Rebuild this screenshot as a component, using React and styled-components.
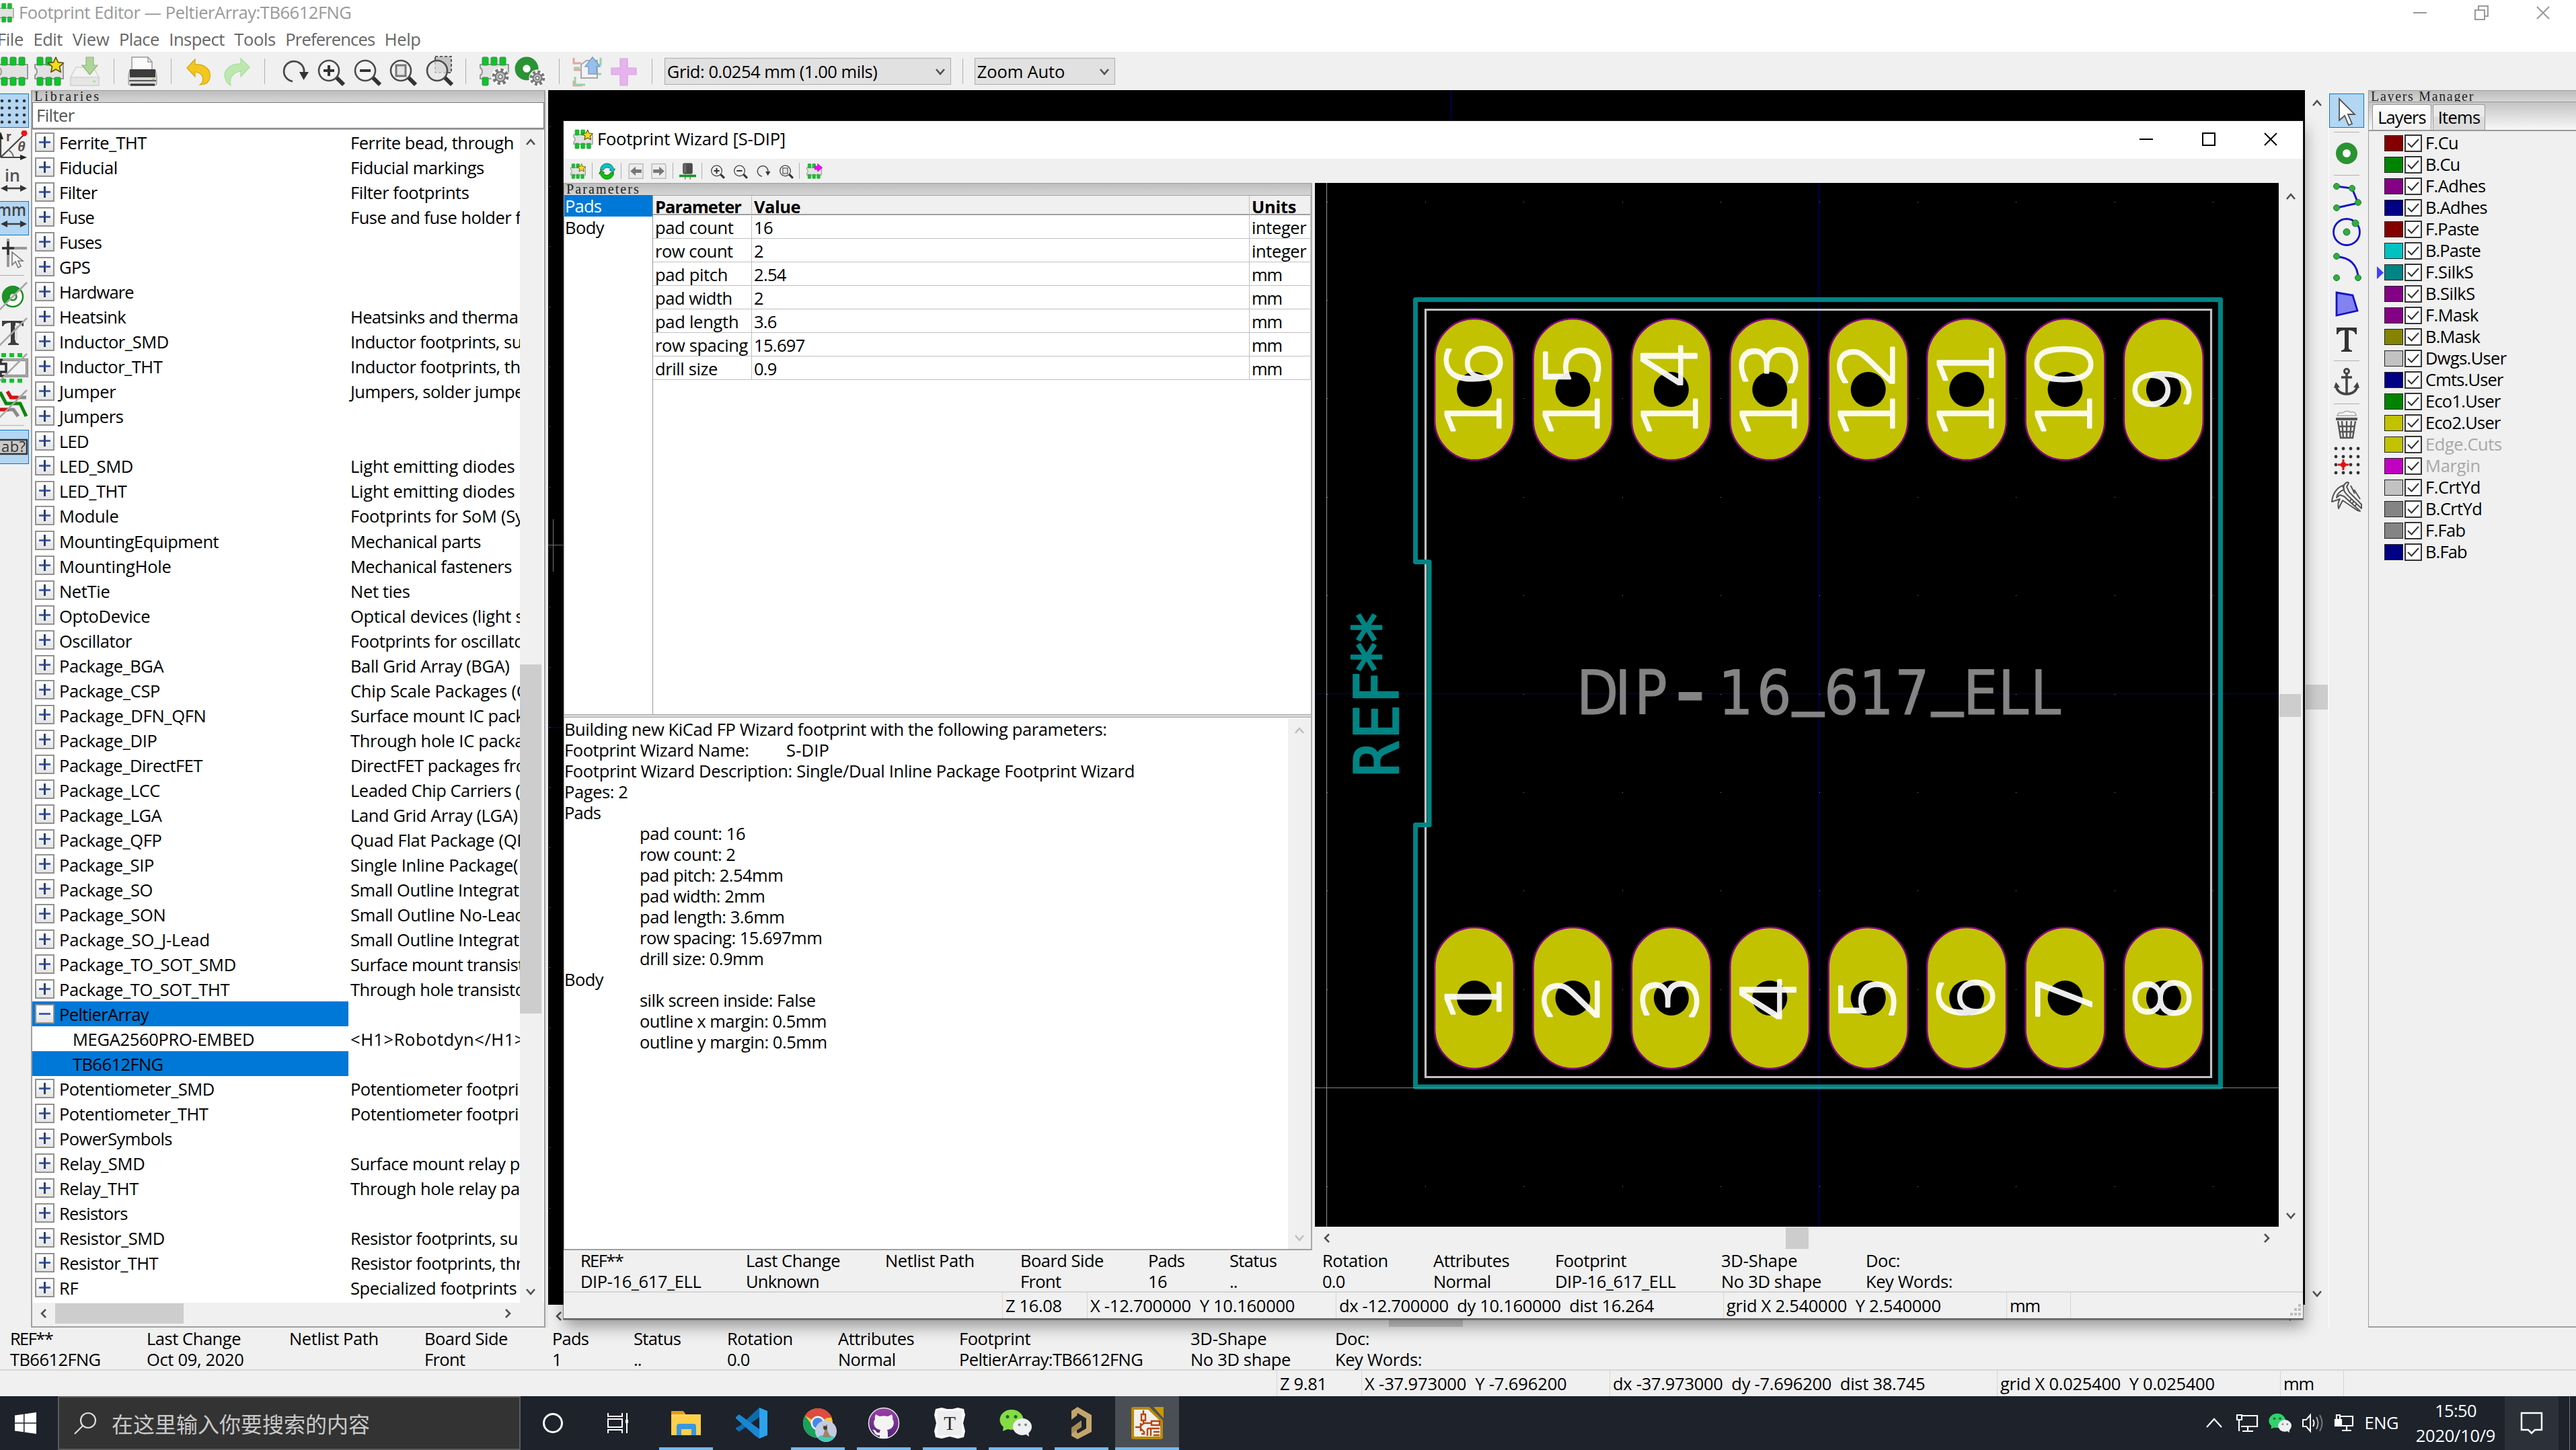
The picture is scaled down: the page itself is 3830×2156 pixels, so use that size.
import React from "react";
import styled, { createGlobalStyle, css } from "styled-components";

const UI = '"Open Sans", "Noto Sans", "Noto Sans CJK SC", sans-serif';

const Global = createGlobalStyle`
  html, body { margin: 0; padding: 0; overflow: hidden; background: #f0f0f0; }
  * { box-sizing: border-box; }
  body { font-family: ${UI}; font-size: 25.5px; color: #000; }
  svg { display: block; flex: none; }
`;

/* ---------- text with system-UI advance widths ---------- */

const ADV = {
  " ": 274, "!": 284, "(": 302, ")": 302, "*": 417, "+": 684, ",": 217, "-": 400, ".": 217, "/": 390,
  ":": 217, "<": 684, ">": 684, "?": 448, A: 645, B: 573, C: 619, D: 701, E: 506, F: 488, G: 687, H: 710,
  I: 266, J: 357, K: 580, L: 471, M: 898, N: 748, O: 754, P: 560, Q: 754, R: 598, S: 531, T: 524, U: 687,
  V: 621, W: 934, X: 590, Y: 553, Z: 570, "[": 302, "]": 302, _: 415, a: 509, b: 588, c: 462, d: 588,
  e: 523, f: 313, g: 588, h: 565, i: 242, j: 242, k: 497, l: 242, m: 861, n: 565, o: 586, p: 588, q: 588,
  r: 348, s: 424, t: 339, u: 565, v: 479, w: 723, x: 459, y: 484, z: 452, "—": 1000,
};
const SIZE = 26;
const ctx = document.createElement("canvas").getContext("2d");

function tracking(text, width, bold, family) {
  const target = width || [...text].reduce((s, c) => s + (ADV[c] || 539), 0) * SIZE / 1000;
  ctx.font = family || `${bold ? 700 : 400} 25.5px "Open Sans"`;
  return (target - ctx.measureText(text).width) / text.length;
}

const Txt = styled.span`
  white-space: pre;
  line-height: 1;
  font-weight: ${(p) => (p.$bold ? 700 : 400)};
  ${(p) => p.$color && css`color: ${p.$color};`}
`;
const T = ({ children, w, bold, color }) => (
  <Txt $bold={bold} $color={color} style={{ letterSpacing: `${tracking(children, w, bold)}px` }}>
    {children}
  </Txt>
);

const CaptionBar = styled.div`
  height: ${(p) => p.$h || 18}px;
  flex: none;
  display: flex;
  align-items: center;
  padding-left: 3px;
  border-top: 1px solid #a0a0a0;
  background: linear-gradient(#bdbdbd, #d6d6d6);
  font: 20px/17px "Liberation Serif", "Noto Sans CJK SC", serif;
  white-space: pre;
  color: #222;
`;
const Caption = ({ children, h }) => (
  <CaptionBar $h={h}>
    <span style={{ letterSpacing: `${tracking(children, children.length * 11, false, '20px "Liberation Serif"')}px` }}>
      {children}
    </span>
  </CaptionBar>
);

/* ---------- icons ---------- */

const Ico = ({ s = 48, children }) => (
  <svg width={s} height={s} viewBox="0 0 48 48" fill="none">{children}</svg>
);
const G = "#0fc42b";
const Footprint = ({ skip = [] }) => (
  <>
    <path d="M3 14H45V35H3V30a5 6 0 0 0 0-11Z" fill="#e2e2e2" stroke="#999" strokeWidth="2" />
    {[[6, 3], [19, 3], [32, 3], [6, 33], [19, 33], [32, 33]].map(([x, y], i) =>
      skip.includes(i) ? null : <rect key={i} x={x} y={y} width="9" height="12" rx="1.5" fill={G} stroke="#3d8a48" strokeWidth="1" />)}
  </>
);
const Gear = ({ x, y, r = 10 }) => (
  <g transform={`translate(${x} ${y})`}>
    <circle r={r} stroke="#fff" strokeWidth="7" />
    <circle r={r} stroke="#777" strokeWidth="5" strokeDasharray={`${r * 0.42} ${r * 0.365}`} />
    <circle r={r * 0.72} fill="#bdbdbd" stroke="#777" strokeWidth="2" />
    <circle r={r * 0.28} fill="#fff" stroke="#777" strokeWidth="1.5" />
  </g>
);
const Star = () => (
  <path d="M34 3l3.4 7.6 8.2.9-6.1 5.6 1.7 8.1L34 21l-7.2 4.200 1.700-8.100-6.100-5.600 8.200-.900z" fill="#f2dc1c" stroke="#59500a" strokeWidth="1.6" strokeLinejoin="round" />
);
const Lens = ({ children }) => (
  <>
    <path d="M35 33L46 44" stroke="#333" strokeWidth="6" />
    <circle cx="24" cy="23" r="15" fill="#f4f4f4" stroke="#4c4c4c" strokeWidth="2.6" />
    {children}
  </>
);
const Gdot = ({ x, y, r = 4.5 }) => <circle cx={x} cy={y} r={r} fill="#2fae3f" stroke="#1c7a2a" strokeWidth="1" />;
const Slash = () => <path d="M0 46L43 3" stroke="#a6a6a6" strokeWidth="2.6" />;

const icons = {
  footprint: <Footprint />,
  newFootprint: <><Footprint skip={[2]} /><Star /></>,
  save: (
    <g opacity=".9">
      <path d="M11 18H37L45 33V45H3V33Z" fill="#f3f3f3" stroke="#d2d2d2" strokeWidth="1.5" />
      <path d="M3 33H45V45H3Z" fill="#e6e6e6" stroke="#cfcfcf" strokeWidth="1.5" />
      <path d="M26 3H37V15H43L31.500 29L20 15H26Z" fill="#a9d192" stroke="#86b56c" strokeWidth="1.2" />
      <path d="M36 39h4" stroke="#a5e08f" strokeWidth="3" />
    </g>
  ),
  print: (
    <>
      <path d="M8 3H32L38 10V24H8Z" fill="#fafafa" stroke="#999" strokeWidth="1.5" />
      <path d="M32 3V10H38" stroke="#999" strokeWidth="1.500" />
      <path d="M5 22H43L45 30V42Q45 45 42 45H6Q3 45 3 42V30Z" fill="#d8d8d8" stroke="#8a8a8a" />
      <path d="M5 21H43V33H5Z" fill="#3b3b3b" />
      <path d="M4 38H44" stroke="#555" strokeWidth="2" />
      <path d="M38 36h4" stroke="#7be04c" strokeWidth="2.500" />
      <path d="M6 44H42" stroke="#333" strokeWidth="3" />
    </>
  ),
  undo: (
    <path d="M5 19L17 6V14C32 13 41 22 39 33C38 40 33 44 24 44C32 39 30 26 17 25V32Z" fill="#f2c81c" stroke="#d3a40a" strokeWidth="1.200" />
  ),
  redo: (
    <path d="M44 18L31 5V13C14 12 4 24 8 35C9 40 12 43 16 45C13 34 20 25 31 24V32Z" fill="#bce8b0" stroke="#a6dd99" strokeWidth="1.200" />
  ),
  rotate: (
    <>
      <path d="M23 39A15 15 0 1 1 40 26" stroke="#4a4a4a" strokeWidth="2.800" />
      <path d="M33 25H47L39.500 37Z" fill="#333" />
    </>
  ),
  zoomIn: <Lens><path d="M16 23H32M24 15V31" stroke="#333" strokeWidth="4" /></Lens>,
  zoomOut: <Lens><path d="M16 23H32" stroke="#333" strokeWidth="4" /></Lens>,
  zoomFit: <Lens><rect x="17" y="15" width="14" height="16" fill="#e4e4e4" stroke="#777" strokeWidth="3" /></Lens>,
  zoomSel: (
    <>
      <rect x="21" y="2" width="24" height="24" fill="#c4c4c4" stroke="#333" strokeWidth="1.600" strokeDasharray="4 3" />
      <path d="M35 33L46 44" stroke="#333" strokeWidth="6" />
      <circle cx="24" cy="23" r="15" fill="#e6e6e6" fillOpacity=".7" stroke="#4c4c4c" strokeWidth="2.600" />
    </>
  ),
  fpGear: <><Footprint skip={[4, 5]} /><Gear x={33} y={32} /></>,
  padGear: (
    <>
      <circle cx="19" cy="20" r="11.500" stroke="#2a9334" strokeWidth="12" />
      <circle cx="19" cy="20" r="5.500" fill="#fff" />
      <Gear x={35} y={34} r={9} />
    </>
  ),
  insert: (
    <g opacity=".6">
      <path d="M3 4V12H14M3 22H14M3 38V45H16" stroke="#e07070" strokeWidth="3" />
      <path d="M3 19H12M5 32V44H20M43 4V14H36M44 28H34" stroke="#5cc07a" strokeWidth="3" />
      <path d="M14 14L22 8H38V34H14Z" fill="#f4f4f4" stroke="#777" strokeWidth="2" />
      <path d="M31 3L42 17H37V28H25V17H20Z" fill="#5fa0ea" stroke="#2f6ab4" strokeWidth="1.500" />
    </g>
  ),
  plus: <path d="M19 5H30V19H43V29H30V45H19V29H6V19H19Z" fill="#e6b3ec" stroke="#d9a3e2" strokeWidth="1.200" />,
  refresh: (
    <>
      <path d="M5 21A19 18 0 0 1 43 19L47 17L42 27L31 21L35 20A11 10 0 0 0 14 21Z" fill="#0bc4c4" stroke="#036060" strokeWidth="1.600" />
      <path d="M43 28A19 18 0 0 1 5 30L1 32L6 22L17 28L13 29A11 10 0 0 0 34 28Z" fill="#08c408" stroke="#035a03" strokeWidth="1.600" />
    </>
  ),
  prev: (
    <><path d="M6 3H44V45H4V8Z" fill="#ededed" stroke="#b4b4b4" strokeWidth="2.500" /><path d="M8 24L23 11V19H40V29H23V37Z" fill="#777" /></>
  ),
  next: (
    <><path d="M4 3H42L44 8V45H4Z" fill="#ededed" stroke="#b4b4b4" strokeWidth="2.500" /><path d="M40 24L25 11V19H8V29H25V37Z" fill="#777" /></>
  ),
  threeD: (
    <><path d="M17 34V48M31 34V48" stroke="#555" strokeWidth="2" /><rect x="10" y="1" width="28" height="31" rx="4" fill="#4a4a4a" /><rect x="13" y="3" width="7" height="26" fill="#6c6c6c" /><rect x="0" y="34" width="48" height="7" fill="#12961f" /></>
  ),
  exportFp: <><Footprint skip={[2]} /><path d="M26 10H34V3L47 14L34 25V19H26Z" fill="#f0f" stroke="#90c" strokeWidth="1.500" /></>,
  grid: (
    <g fill="#333">
      {[0, 1, 2, 3].map((r) => [0, 1, 2, 3].map((c) => <circle key={r * 4 + c} cx={6 + c * 11} cy={9 + r * 10.500} r="2.300" />))}
    </g>
  ),
  polar: (
    <>
      <path d="M4 40V6M4 40L39 6M4 40H40" stroke="#444" strokeWidth="2.200" />
      <path d="M0 13L4 2L8 13ZM33 36L43 40L33 44Z" fill="#222" />
      <path d="M15 29A14 14 0 0 1 23 39" stroke="#777" strokeWidth="2" />
      <circle cx="39" cy="4" r="4.500" fill="#f01414" />
      <text x="12" y="16" fontFamily="Liberation Sans, sans-serif" fontWeight="700" fontSize="20" fill="#5b4b4b">r</text>
      <text x="29" y="31" fontFamily="Liberation Sans, sans-serif" fontWeight="700" fontStyle="italic" fontSize="21" fill="#5b4b4b">θ</text>
    </>
  ),
  inch: (
    <>
      <text x="10" y="23" fontFamily="Open Sans, sans-serif" fontWeight="600" fontSize="25" fill="#555">in</text>
      <path d="M8 33H40" stroke="#444" strokeWidth="2.600" /><path d="M14 28L4 33L14 38ZM33 28L43 33L33 38Z" fill="#333" />
    </>
  ),
  mm: (
    <>
      <text x="-2" y="21" fontFamily="Open Sans, sans-serif" fontWeight="600" fontSize="25" fill="#444" textLength="44" lengthAdjust="spacingAndGlyphs">mm</text>
      <path d="M8 33H40" stroke="#444" strokeWidth="2.600" /><path d="M14 28L4 33L14 38ZM33 28L43 33L33 38Z" fill="#333" />
    </>
  ),
  cursor: (
    <>
      <path d="M15 2V44M6 16H43" stroke="#999" strokeWidth="4" /><path d="M15 6V26M6 16H24" stroke="#333" strokeWidth="3.500" />
      <path d="M21 22V41L26 36L30 45L34 43L30 35H37Z" fill="#f6f6f6" stroke="#777" strokeWidth="1.600" />
    </>
  ),
  padOff: (
    <>
      <circle cx="22" cy="24" r="15" fill="#fff" stroke="#1d8d24" strokeWidth="2.500" />
      <path d="M33 13A15.500 15.500 0 1 0 11 35Z" fill="#1f9127" />
      <circle cx="22" cy="24" r="5.500" fill="#dfe9df" stroke="#1d8d24" strokeWidth="2.500" /><Slash />
    </>
  ),
  textOff: (
    <>
      <path d="M6 7H38V15H36Q35 10 26 10V38Q26 40 31 41V43H15V41Q19 40 19 38V10Q9 10 8 15H6Z" fill="#3c3c3c" />
      <path d="M27 14V36" stroke="#ddd" strokeWidth="4" /><Slash />
    </>
  ),
  fpOff: (
    <>
      <path d="M4 12H43V36H4V30H12V18H4Z" fill="#f4f4f4" stroke="#333" strokeWidth="3.500" />
      <path d="M7 12H43V36H10" stroke="#aaa" strokeWidth="3" />
      {[5, 17, 29].map((x) => <React.Fragment key={x}><rect x={x} y="2" width="7" height="6" fill={G} /><rect x={x} y="40" width="7" height="6" fill={G} /></React.Fragment>)}
      <Slash />
    </>
  ),
  tracksOff: (
    <>
      <path d="M14 6L20 14H42" stroke="#8a8a8a" strokeWidth="5" /><path d="M14 5L19 14H30" stroke="#d81010" strokeWidth="5" />
      <path d="M3 6L12 23H33L42 42" stroke="#0f860f" strokeWidth="5" />
      <path d="M0 32H23L30 42" stroke="#8a8a8a" strokeWidth="5" /><path d="M0 32H16" stroke="#d81010" strokeWidth="5" /><Slash />
    </>
  ),
  ab: (
    <>
      <rect x="-4" y="14" width="47" height="21" fill="#c9c9c9" stroke="#333" strokeWidth="2.500" />
      <text x="5" y="32" fontFamily="Open Sans, sans-serif" fontSize="22" fill="#333" textLength="36">ab?</text>
    </>
  ),
  select: <path d="M13 6V38L21 31L27 45L32 43L26 29H36Z" fill="#fafafa" stroke="#555" strokeWidth="1.800" />,
  pad: <><circle cx="24" cy="24" r="11" stroke="#2a9431" strokeWidth="10" /><circle cx="24" cy="24" r="5.500" fill="#fff" /></>,
  polyline: (
    <><path d="M9 9L32 12L41 34L9 41" stroke="#1414c8" strokeWidth="3" /><Gdot x={9} y={9} /><Gdot x={32} y={12} /><Gdot x={41} y={33} /><Gdot x={9} y={41} /></>
  ),
  circle: <><circle cx="24" cy="24" r="19.500" stroke="#1414c8" strokeWidth="2.800" /><Gdot x={24} y={24} r={5} /><Gdot x={37} y={11} r={5} /></>,
  arc: <><path d="M9 8C28 8 41 20 41 40" stroke="#1414c8" strokeWidth="3" /><Gdot x={9} y={7} /><Gdot x={41} y={39} /><Gdot x={9} y={39} /></>,
  polygon: <path d="M9 7L33 11L40 34L9 41Z" fill="#8282f0" stroke="#1414c8" strokeWidth="2.800" />,
  text: <path d="M9 6H39V16H37Q36 10 27 10V36Q27 39 32 40V42H16V40Q21 39 21 36V10Q12 10 11 16H9Z" fill="#333" />,
  anchor: (
    <>
      <circle cx="24" cy="8" r="3.500" stroke="#444" strokeWidth="3" />
      <path d="M24 12V42M16 17H32M8 28Q9 41 24 42Q39 41 40 28" stroke="#444" strokeWidth="3.500" />
      <path d="M5 33L8 24L14 32ZM43 33L40 24L34 32Z" fill="#444" />
    </>
  ),
  trash: (
    <>
      <path d="M10 10Q12 4 18 6Q24 1 30 5Q37 3 38 10Z" fill="#f6f6f6" stroke="#aaa" strokeWidth="1.500" />
      <path d="M8 13H40V17H8Z" fill="#555" />
      <path d="M11 18L15 43H33L37 18M17 18L19 43M24 18V43M31 18L29 43M12 26H36M13 34H35" stroke="#555" strokeWidth="2.400" />
    </>
  ),
  origin: (
    <>
      <g fill="#333">{[0, 1, 2, 3].map((r) => [0, 1, 2, 3].map((c) => <circle key={r * 4 + c} cx={8 + c * 11} cy={6 + r * 12} r="2.400" />))}</g>
      <path d="M19 22V38M11 30H27" stroke="#e01010" strokeWidth="3" /><circle cx="19" cy="30" r="4" fill="#e01010" />
    </>
  ),
  caliper: (
    <g fill="#f6f6f6" stroke="#555" strokeWidth="2" strokeLinejoin="round">
      <path d="M20 7Q25 1 27 4L24 10L28 18L46 36V42L25 22Q18 16 20 7Z" />
      <path d="M2 32Q4 14 18 8L20 14Q10 18 9 26L14 22L20 24L44 46L40 45L18 30L12 42Q10 34 14 28L8 30Z" />
      <path d="M28 32L31 28M32 35L35 31M36 39L39 35M30 8L36 20M35 14L44 28" fill="none" />
    </g>
  ),
};

/* ---------- shared parts ---------- */

const Chev = ({ dir, color = "#505050" }) => {
  const d = { up: "M5 15L11 8L17 15", down: "M5 8L11 15L17 8", left: "M14 5L8 11L14 17", right: "M8 5L14 11L8 17" }[dir];
  return <svg width="22" height="22" viewBox="0 0 22 22"><path d={d} fill="none" stroke={color} strokeWidth="2.600" /></svg>;
};

const Scroll = styled.div`
  display: flex;
  flex: none;
  align-items: center;
  justify-content: space-between;
  background: #f0f0f0;
  flex-direction: ${(p) => (p.$v ? "column" : "row")};
  width: ${(p) => (p.$w ? `${p.$w}px` : "auto")};
  height: ${(p) => (p.$h ? `${p.$h}px` : "auto")};
  padding: ${(p) => p.$pad || "8px 0"};
`;
const Track = styled.div`
  flex: 1;
  display: flex;
  flex-direction: ${(p) => (p.$v ? "column" : "row")};
  width: ${(p) => (p.$v ? "100%" : "auto")};
  height: ${(p) => (p.$v ? "auto" : "100%")};
`;
const Thumb = styled.div`
  background: #cdcdcd;
  flex: none;
  ${(p) => (p.$v
    ? css`margin-top: ${p.$at}px; height: ${p.$len}px; width: ${p.$t}px;`
    : css`margin-left: ${p.$at}px; width: ${p.$len}px; height: ${p.$t}px;`)}
`;

const Slot = styled.div`
  flex: none;
  display: flex;
  align-items: center;
  justify-content: center;
  width: ${(p) => p.$w}px;
  height: ${(p) => p.$h}px;
`;
const SepV = styled.div`
  width: 1px;
  height: ${(p) => p.$h}px;
  background: #b0b0b0;
`;

/* ---------- main window chrome ---------- */

const Screen = styled.div`
  position: relative;
  width: 3830px;
  height: 2156px;
  overflow: hidden;
  display: flex;
  flex-direction: column;
  background: #f0f0f0;
`;
const TitleBar = styled.div`
  height: 38px;
  background: #fff;
  display: flex;
  align-items: center;
  flex: none;
  color: #999;
`;
const TitleIcon = styled.div`
  width: 28px;
  overflow: hidden;
  display: flex;
  justify-content: flex-end;
  padding-right: 6px;
`;
const Controls = styled.div`
  margin-left: auto;
  display: flex;
  align-items: center;
  gap: ${(p) => p.$gap}px;
  padding-right: ${(p) => p.$right}px;
`;
const Menu = styled.div`
  height: 39px;
  padding-top: 2px;
  background: #fff;
  display: flex;
  align-items: center;
  gap: 14.6px;
  color: #666;
  flex: none;
  & > :first-child { margin-left: -4px; }
`;
const Toolbar = styled.div`
  height: 57px;
  display: flex;
  align-items: center;
  flex: none;
  & > :first-child { margin-left: -7px; }
`;
const Combo = styled.div`
  height: 40px;
  width: ${(p) => p.$w}px;
  margin: 0 ${(p) => p.$mr}px 0 ${(p) => p.$ml}px;
  background: #e1e1e1;
  border: 1px solid #adadad;
  display: flex;
  align-items: center;
  justify-content: space-between;
  padding: 0 4px 0 3px;
  & > span { padding-top: 2px; }
`;
const Body = styled.div`
  height: 1840px;
  display: flex;
  flex: none;
`;
const SideBar = styled.div`
  width: ${(p) => p.$w}px;
  flex: none;
  display: flex;
  flex-direction: column;
  padding-top: 4px;
  align-items: ${(p) => (p.$right ? "center" : "flex-start")};
  background: #f0f0f0;
  border-left: ${(p) => (p.$right ? "1px solid #fff" : "none")};
`;
const SideButton = styled.div`
  width: ${(p) => (p.$right ? 52 : 43)}px;
  height: 53.2px;
  flex: none;
  display: flex;
  align-items: center;
  justify-content: flex-end;
  padding: 1px 0;
  & > div {
    width: 100%;
    height: 51px;
    display: flex;
    align-items: center;
    overflow: hidden;
    justify-content: ${(p) => (p.$right ? "center" : "flex-end")};
    border: ${(p) => (p.$on ? "1.500px solid #0078d7" : "1.500px solid transparent")};
    ${(p) => !p.$right && "border-left: none;"}
    background: ${(p) => (p.$on ? "#b3d6f3" : "transparent")};
  }
  svg { margin-right: ${(p) => (p.$right ? 0 : -3)}px; }
`;
const SideSep = styled.div`
  width: ${(p) => (p.$right ? 38 : 36)}px;
  height: 10.5px;
  flex: none;
  display: flex;
  align-items: center;
  &::after { content: ""; height: 1px; width: 100%; background: #b0b0b0; }
`;

/* ---------- library tree ---------- */

const Panel = styled.div`
  width: 765px;
  flex: none;
  display: flex;
  flex-direction: column;
  border-left: 2px solid #a0a0a0;
  border-right: 2px solid #a0a0a0;
  border-bottom: 2px solid #a0a0a0;
  background: #f0f0f0;
`;
const FilterBox = styled.div`
  height: 39px;
  flex: none;
  border: 1px solid #7a7a7a;
  background: #fff;
  color: #555;
  display: flex;
  align-items: center;
  padding-left: 5px;
`;
const TreeArea = styled.div`
  height: 1746px;
  flex: none;
  display: flex;
  border-top: 2px solid #a0a0a0;
  background: #fff;
`;
const Rows = styled.div`
  width: 725px;
  flex: none;
  overflow: hidden;
`;
const TreeRow = styled.div`
  height: 37.03px;
  display: grid;
  grid-template-columns: 470px 255px;
  & span { padding-top: 3px; }
`;
const NameCell = styled.div`
  display: flex;
  align-items: center;
  gap: 7px;
  padding-left: ${(p) => (p.$child ? 60 : 4)}px;
  background: ${(p) => (p.$on ? "#0078d7" : "transparent")};
`;
const DescCell = styled.div`
  display: flex;
  align-items: center;
  padding-left: 3px;
  overflow: hidden;
`;
const Expander = styled.div`
  width: 29px;
  height: 29px;
  flex: none;
  border: 2px solid #919191;
  background: linear-gradient(#fff, #e4e4e4);
  display: flex;
  align-items: center;
  justify-content: center;
`;

const tree = [
  ["Ferrite_THT", "Ferrite bead, through"], ["Fiducial", "Fiducial markings"], ["Filter", "Filter footprints"],
  ["Fuse", "Fuse and fuse holder f"], ["Fuses", ""], ["GPS", ""], ["Hardware", ""],
  ["Heatsink", "Heatsinks and therma"], ["Inductor_SMD", "Inductor footprints, su"], ["Inductor_THT", "Inductor footprints, th"],
  ["Jumper", "Jumpers, solder jumpe"], ["Jumpers", ""], ["LED", ""], ["LED_SMD", "Light emitting diodes"],
  ["LED_THT", "Light emitting diodes"], ["Module", "Footprints for SoM (Sy"], ["MountingEquipment", "Mechanical parts"],
  ["MountingHole", "Mechanical fasteners"], ["NetTie", "Net ties"], ["OptoDevice", "Optical devices (light s"],
  ["Oscillator", "Footprints for oscillato"], ["Package_BGA", "Ball Grid Array (BGA)"], ["Package_CSP", "Chip Scale Packages (C"],
  ["Package_DFN_QFN", "Surface mount IC pack"], ["Package_DIP", "Through hole IC packa"], ["Package_DirectFET", "DirectFET packages fro"],
  ["Package_LCC", "Leaded Chip Carriers ("], ["Package_LGA", "Land Grid Array (LGA)"], ["Package_QFP", "Quad Flat Package (QF"],
  ["Package_SIP", "Single Inline Package("], ["Package_SO", "Small Outline Integrat"], ["Package_SON", "Small Outline No-Lead"],
  ["Package_SO_J-Lead", "Small Outline Integrat"], ["Package_TO_SOT_SMD", "Surface mount transist"],
  ["Package_TO_SOT_THT", "Through hole transisto"], ["PeltierArray", "", "open"], ["MEGA2560PRO-EMBED", "<H1>Robotdyn</H1>", "child"],
  ["TB6612FNG", "", "childOn"], ["Potentiometer_SMD", "Potentiometer footpri"], ["Potentiometer_THT", "Potentiometer footpri"],
  ["PowerSymbols", ""], ["Relay_SMD", "Surface mount relay p"], ["Relay_THT", "Through hole relay pa"], ["Resistors", ""],
  ["Resistor_SMD", "Resistor footprints, su"], ["Resistor_THT", "Resistor footprints, thr"], ["RF", "Specialized footprints"],
];

const LibraryPanel = () => (
  <Panel>
    <Caption>Libraries</Caption>
    <FilterBox><T>Filter</T></FilterBox>
    <TreeArea>
      <Rows>
        {tree.map(([name, desc, kind], i) => {
          const child = kind === "child" || kind === "childOn";
          return (
            <TreeRow key={i}>
              <NameCell $child={child} $on={kind === "open" || kind === "childOn"}>
                {!child && (
                  <Expander>
                    <svg width="19" height="19" viewBox="0 0 19 19">
                      <path d="M1 9.500H18" stroke="#4460ac" strokeWidth="3" />
                      {kind !== "open" && <path d="M9.500 1V18" stroke="#2c3f78" strokeWidth="3" />}
                    </svg>
                  </Expander>
                )}
                <T>{name}</T>
              </NameCell>
              <DescCell>{desc && <T>{desc}</T>}</DescCell>
            </TreeRow>
          );
        })}
      </Rows>
      <Scroll $v $w={34} $pad="7px 3px 6px 0">
        <Chev dir="up" /><Track $v><Thumb $v $at={766} $len={519} $t={32} /></Track><Chev dir="down" />
      </Scroll>
    </TreeArea>
    <Scroll $h={34} $pad="1px 43px 3px 6px">
      <Chev dir="left" /><Track><Thumb $at={6} $len={191} $t={30} /></Track><Chev dir="right" />
    </Scroll>
  </Panel>
);

/* ---------- main canvas ---------- */

const Gutter = styled.div`
  width: 4px;
  flex: none;
  background: #e8e8e8;
`;
const CanvasCol = styled.div`
  width: 2612px;
  flex: none;
  display: flex;
  flex-direction: column;
`;

/* ---------- layers ---------- */

const LayersPanel = styled.div`
  width: 310px;
  margin-left: 6px;
  flex: none;
  display: flex;
  flex-direction: column;
  border-left: 1.5px solid #a0a0a0;
  border-bottom: 2px solid #a0a0a0;
`;
const Tabs = styled.div`
  height: 44px;
  flex: none;
  border-top: 1px solid #999;
  border-bottom: 2px solid #999;
  background: linear-gradient(#c4c4c4, #f8f8f8);
  display: flex;
  align-items: flex-end;
  padding-left: 5px;
  gap: 2px;
`;
const Tab = styled.div`
  width: ${(p) => p.$w}px;
  height: 38px;
  border: 1px solid #999;
  border-bottom: none;
  border-radius: 3px 3px 0 0;
  background: ${(p) => (p.$on ? "linear-gradient(#fff, #f0f0f0)" : "linear-gradient(#eaeaea 45%, #dcdcdc 50%)")};
  display: flex;
  align-items: center;
  justify-content: center;
`;
const LayerRow = styled.div`
  height: 32px;
  display: flex;
  align-items: center;
  color: ${(p) => (p.$off ? "#a8a8a8" : "#000")};
`;
const LayerList = styled.div`padding-top: 2px;`;
const Marker = styled.div`
  width: 23px;
  flex: none;
  display: flex;
  justify-content: flex-end;
  padding-right: 1px;
`;
const Swatch = styled.div`
  width: 28px;
  height: 24px;
  border: 1px solid #222;
  background: ${(p) => p.$c};
`;
const Check = styled.div`
  width: 26px;
  height: 26px;
  margin: 0 5px 0 2px;
  border: 2px solid #333;
  background: #fff;
  display: flex;
  align-items: center;
  justify-content: center;
`;
const layers = [
  ["F.Cu", "#840000"], ["B.Cu", "#008400"], ["F.Adhes", "#840084"], ["B.Adhes", "#000084"], ["F.Paste", "#840000"],
  ["B.Paste", "#00c2c2"], ["F.SilkS", "#008484"], ["B.SilkS", "#840084"], ["F.Mask", "#840084"], ["B.Mask", "#848400"],
  ["Dwgs.User", "#c2c2c2"], ["Cmts.User", "#000084"], ["Eco1.User", "#008400"], ["Eco2.User", "#c2c200"],
  ["Edge.Cuts", "#c2c200", true], ["Margin", "#c200c2", true], ["F.CrtYd", "#c2c2c2"], ["B.CrtYd", "#848484"],
  ["F.Fab", "#848484"], ["B.Fab", "#000084"],
];

/* ---------- info & status ---------- */

const Info = styled.div`
  height: ${(p) => p.$h}px;
  flex: none;
  display: grid;
  grid-template-columns: ${(p) => p.$cols};
  padding: ${(p) => p.$pad};
  border-bottom: 2px solid #d5d5d5;
  background: #f0f0f0;
`;
const InfoCell = styled.div`
  display: flex;
  flex-direction: column;
  & > span { height: 31px; line-height: 31px; }
`;
const Status = styled.div`
  height: ${(p) => p.$h}px;
  flex: none;
  display: grid;
  grid-template-columns: ${(p) => p.$cols};
  background: #f0f0f0;
`;
const StatusCell = styled.div`
  display: flex;
  align-items: center;
  padding: 2px 0 0 4px;
  border-right: 1px solid #d5d5d5;
`;
const InfoBar = ({ items, ...p }) => (
  <Info {...p}>
    {items.map(([a, b], i) => (
      <InfoCell key={i}><T>{a}</T>{b && <T>{b}</T>}</InfoCell>
    ))}
  </Info>
);
const StatusLine = ({ items, ...p }) => (
  <Status {...p}>{items.map((t, i) => <StatusCell key={i}>{t && <T>{t}</T>}</StatusCell>)}</Status>
);

/* ---------- wizard ---------- */

const Wizard = styled.div`
  position: absolute;
  left: 838px;
  top: 180px;
  width: 2586px;
  height: 1782px;
  display: flex;
  flex-direction: column;
  background: #f0f0f0;
  border-bottom: 2px solid #6a6a6a;
  box-shadow: 0 0 0 1px rgba(60, 60, 60, 0.5), 2px 10px 22px rgba(0, 0, 0, 0.38);
`;
const WizTitle = styled.div`
  height: 56px;
  flex: none;
  background: #fff;
  display: flex;
  align-items: center;
  padding: 0 0 2px 13px;
  gap: 5px;
`;
const WizTools = styled.div`
  height: 36px;
  flex: none;
  display: flex;
  align-items: center;
  padding-left: 4px;
`;
const WizBody = styled.div`
  height: 1587px;
  flex: none;
  display: flex;
`;
const WizLeft = styled.div`
  width: 1113px;
  flex: none;
  display: flex;
  flex-direction: column;
  border-left: 1px solid #a0a0a0;
  border-right: 2px solid #a8a8a8;
  border-bottom: 2px solid #a0a0a0;
`;
const ParamArea = styled.div`
  height: 772px;
  flex: none;
  display: flex;
  background: #fff;
`;
const PageList = styled.div`
  width: 132px;
  flex: none;
  border-right: 1px solid #999;
`;
const PageItem = styled.div`
  height: 32px;
  width: 131px;
  padding: 2px 0 0 1px;
  display: flex;
  align-items: center;
  background: ${(p) => (p.$on ? "#0078d7" : "#fff")};
  color: ${(p) => (p.$on ? "#fff" : "#000")};
`;
const Table = styled.div`flex: 1;`;
const TR = styled.div`
  height: ${(p) => (p.$head ? 30 : 35)}px;
  display: grid;
  grid-template-columns: 147px 740px 1fr;
  background: ${(p) => (p.$head ? "#f0f0f0" : "#fff")};
  border-bottom: ${(p) => (p.$head ? "2px solid #a0a0a0" : "1.500px solid #c0c0c0")};
  ${(p) => p.$head && "border-top: 1px solid #a0a0a0;"}
  & span { padding-top: 4px; }
`;
const TD = styled.div`
  display: flex;
  align-items: center;
  padding-left: 3px;
  border-right: 1px solid #c0c0c0;
`;
const Split = styled.div`
  height: 5px;
  flex: none;
  background: #dcdcdc;
  border-top: 1px solid #a0a0a0;
  border-bottom: 1px solid #a0a0a0;
`;
const LogArea = styled.div`
  flex: 1;
  display: flex;
  background: #fff;
  padding-top: 2px;
`;
const Log = styled.div`
  flex: 1;
  & > div { height: 31.02px; display: flex; align-items: center; }
`;
const LogLine = styled.div`padding-left: ${(p) => (p.$in ? 112 : 0)}px;`;
const Tabbed = styled.span`
  display: inline-flex;
  width: 330px;
`;
const WizRight = styled.div`
  margin-left: 4px;
  width: 1469px;
  flex: none;
  display: flex;
  flex-direction: column;
`;
const ViewRow = styled.div`
  display: flex;
  height: 1552px;
  flex: none;
`;
const Grip = styled.div`
  display: flex;
  justify-content: flex-end;
  align-items: flex-end;
  padding: 0 2px 3px 0;
`;

const log = [
  ["Building new KiCad FP Wizard footprint with the following parameters:"], ["Footprint Wizard Name:", 0, "S-DIP"],
  ["Footprint Wizard Description: Single/Dual Inline Package Footprint Wizard"], ["Pages: 2"], ["Pads"],
  ["pad count: 16", 1], ["row count: 2", 1], ["pad pitch: 2.54mm", 1], ["pad width: 2mm", 1], ["pad length: 3.6mm", 1],
  ["row spacing: 15.697mm", 1], ["drill size: 0.9mm", 1], ["Body"], ["silk screen inside: False", 1],
  ["outline x margin: 0.5mm", 1], ["outline y margin: 0.5mm", 1],
];
const params = [
  ["pad count", "16", "integer"], ["row count", "2", "integer"], ["pad pitch", "2.54", "mm"], ["pad width", "2", "mm"],
  ["pad length", "3.6", "mm"], ["row spacing", "15.697", "mm"], ["drill size", "0.9", "mm"],
];

const PITCH = 146.4;
const MID = 2704.5;
const AXIS = 1031.5;
const STROKE_FONT = '"DejaVu Sans", "DejaVu Sans Light", sans-serif';

const Pad = ({ i, top }) => {
  const x = MID + (i - 3.5) * PITCH;
  const y = AXIS + (top ? -452.4 : 452.4);
  const n = String(top ? 16 - i : i + 1);
  return (
    <g>
      <rect x={x - 59} y={y - 105} width="118" height="210" rx="59" fill="#c2c200" stroke="#840084" strokeWidth="2.500" />
      <circle cx={x} cy={y} r="26" fill="#000" />
      <text
        transform={`translate(${x + 38.5} ${y - 2}) rotate(-90)`}
        textAnchor="middle"
        fontFamily={STROKE_FONT}
        fontWeight="200"
        fontSize="112"
        fill="#fff"
        stroke="#fff"
        strokeWidth="3"
        strokeLinejoin="round"
        opacity=".92"
        letterSpacing="4"
      >
        {n}
      </text>
    </g>
  );
};

/* glyph, left position, optional size and baseline */
const VALUE_TEXT = [
  ["D", 2344], ["I", 2401], ["P", 2430], ["-", 2490, 142, 1074], ["1", 2555], ["6", 2612], ["_", 2665, 104, 1042], ["6", 2712],
  ["1", 2764], ["7", 2817], ["_", 2872, 104, 1042], ["E", 2919], ["L", 2971], ["L", 3019],
];
const REF_TEXT = [["R", -2], ["E", 56], ["F", 110], ["*", 156, 98, 3], ["*", 200, 98, 3]];

const Glyphs = ({ list, size, base }) => list.map(([c, x, s, y], i) => (
  <tspan key={i} x={x} y={y === undefined ? base : y} fontSize={s || size}>{c}</tspan>
));

const FootprintView = () => (
  <svg width="1433" height="1552" viewBox="1955 272 1433 1552" fill="none">
    <rect x="1955" y="272" width="1433" height="1552" fill="#000" />
    {Array.from({ length: 10 }, (_, c) => Array.from({ length: 11 }, (_, r) => (
      <rect key={`${c}-${r}`} x={Math.round(MID + (c - 5) * PITCH)} y={Math.round(AXIS + (r - 5) * PITCH)} width="1" height="1" fill="#848484" />
    )))}
    <path d={`M${MID} 272V1824M1955 ${AXIS}H3388`} stroke="#000084" strokeWidth="1" />
    <path d="M2119.500 460.500H3287.500V1601.500H2119.500Z" stroke="#c2c2c2" strokeWidth="3.200" />
    <path d="M2104.500 445.500H3301.500V1616H2104.500V1226.500H2125V835.500H2104.500Z" stroke="#008484" strokeWidth="7" strokeLinejoin="round" />
    {[0, 1, 2, 3, 4, 5, 6, 7].map((i) => <Pad key={i} i={i} top />)}
    {[0, 1, 2, 3, 4, 5, 6, 7].map((i) => <Pad key={i} i={i} />)}
    <text fontFamily={STROKE_FONT} fontStretch="75%" fill="#848484" stroke="#848484" strokeWidth="1" strokeLinejoin="round">
      <Glyphs list={VALUE_TEXT} size={90} base={1062} />
    </text>
    <text transform="translate(2079 1155) rotate(-90)" fontFamily={STROKE_FONT} fontStretch="75%" fill="#008484" stroke="#008484" strokeWidth="2.500" strokeLinejoin="round">
      <Glyphs list={REF_TEXT} size={90} base={0} />
    </text>
    <path d="M1972.500 272V1824M1955 1617.500H3388" stroke="#848484" strokeWidth="1.200" />
  </svg>
);

const wizTools = ["newFootprint", "|", "refresh", "|", "prev", "next", "|", "threeD", "|", "zoomIn", "zoomOut", "rotate", "zoomFit", "|", "exportFp"];
const mainTools = ["footprint", "newFootprint", "save", "|", "print", "|", "undo", "redo", "|", "rotate", "zoomIn", "zoomOut", "zoomFit", "zoomSel", "|", "fpGear", "padGear", "|", "insert", "plus", "|"];
const leftTools = ["*grid", "polar", "inch", "*mm", "cursor", "|", "padOff", "textOff", "fpOff", "tracksOff", "|", "*ab"];
const rightTools = ["*select", "|", "pad", "|", "polyline", "circle", "arc", "polygon", "text", "|", "anchor", "|", "trash", "origin", "caliper"];

const Side = ({ items, right, w }) => (
  <SideBar $w={w} $right={right}>
    {items.map((k, i) => {
      if (k === "|") return <SideSep key={i} $right={right} />;
      const on = k[0] === "*";
      return <SideButton key={i} $on={on} $right={right}><div><Ico>{icons[on ? k.slice(1) : k]}</Ico></div></SideButton>;
    })}
  </SideBar>
);

const WizardWindow = () => (
  <Wizard>
    <WizTitle>
      <Ico s={32}>{icons.newFootprint}</Ico>
      <T>Footprint Wizard [S-DIP]</T>
      <Controls $gap={72.5} $right={38}>
        <svg width="20" height="20"><path d="M0 10H20" stroke="#000" strokeWidth="2" /></svg>
        <svg width="20" height="20"><path d="M1 1H19V19H1Z" fill="none" stroke="#000" strokeWidth="2" /></svg>
        <svg width="20" height="20"><path d="M1 1L19 19M19 1L1 19" stroke="#000" strokeWidth="2" /></svg>
      </Controls>
    </WizTitle>
    <WizTools>
      {wizTools.map((k, i) => k === "|"
        ? <Slot key={i} $w={9} $h={36}><SepV $h={24} /></Slot>
        : <Slot key={i} $w={34} $h={36}><Ico s={25}>{icons[k]}</Ico></Slot>)}
    </WizTools>
    <WizBody>
      <WizLeft>
        <Caption h={18}>Parameters</Caption>
        <ParamArea>
          <PageList>
            <PageItem $on><T>Pads</T></PageItem>
            <PageItem><T>Body</T></PageItem>
          </PageList>
          <Table>
            <TR $head>
              <TD><T bold w={128}>Parameter</T></TD>
              <TD><T bold w={69}>Value</T></TD>
              <TD><T bold w={66}>Units</T></TD>
            </TR>
            {params.map((r) => (
              <TR key={r[0]}>{r.map((c, i) => <TD key={i}><T>{c}</T></TD>)}</TR>
            ))}
          </Table>
        </ParamArea>
        <Split />
        <LogArea>
          <Log>
            {log.map(([t, ind, extra], i) => (
              <LogLine key={i} $in={ind}>
                {extra ? <><Tabbed><T>{t}</T></Tabbed><T>{extra}</T></> : <T>{t}</T>}
              </LogLine>
            ))}
          </Log>
          <Scroll $v $w={34} $pad="6px 0 6px">
            <Chev dir="up" color="#bfbfbf" /><Chev dir="down" color="#bfbfbf" />
          </Scroll>
        </LogArea>
      </WizLeft>
      <WizRight>
        <ViewRow>
          <FootprintView />
          <Scroll $v $w={36} $pad="9px 2px 6px 1px">
            <Chev dir="up" /><Track $v><Thumb $v $at={729} $len={34} $t={32} /></Track><Chev dir="down" />
          </Scroll>
        </ViewRow>
        <Scroll $h={35} $pad="1px 43px 2px 7px">
          <Chev dir="left" /><Track><Thumb $at={671} $len={34} $t={32} /></Track><Chev dir="right" />
        </Scroll>
      </WizRight>
    </WizBody>
    <InfoBar
      $h={63}
      $pad="0 0 0 25px"
      $cols="246px 207px 201px 190px 121px 138px 165px 181px 247px 215px 300px"
      items={[["REF**", "DIP-16_617_ELL"], ["Last Change", "Unknown"], ["Netlist Path"], ["Board Side", "Front"], ["Pads", "16"], ["Status", ".."], ["Rotation", "0.0"], ["Attributes", "Normal"], ["Footprint", "DIP-16_617_ELL"], ["3D-Shape", "No 3D shape"], ["Doc:", "Key Words:"]]}
    />
    <Status $h={38} $cols="653px 126px 370px 576px 421px 95px 1fr">
      {["", "Z 16.08", "X -12.700000  Y 10.160000", "dx -12.700000  dy 10.160000  dist 16.264", "grid X 2.540000  Y 2.540000", "mm"].map((t, i) => (
        <StatusCell key={i}>{t && <T>{t}</T>}</StatusCell>
      ))}
      <Grip>
        <svg width="18" height="18" fill="#bdbdbd"><path d="M13 0h4v4h-4zM7 6h4v4H7zM13 6h4v4h-4zM1 13h4v4H1zM7 13h4v4H7zM13 13h4v4h-4z" /></svg>
      </Grip>
    </Status>
  </Wizard>
);

/* ---------- taskbar ---------- */

const TaskBar = styled.div`
  height: 80px;
  flex: none;
  background: #1d222b;
  display: flex;
  color: #fff;
`;
const StartButton = styled.div`
  width: 86px;
  display: flex;
  align-items: center;
  padding-left: 22px;
`;
const Search = styled.div`
  width: 688px;
  background: #333;
  border: 2px solid #5a5a5a;
  display: flex;
  align-items: center;
  padding-left: 22px;
  gap: 22px;
  font: 32px/1 "Noto Sans CJK SC", sans-serif;
  color: #c9c9c9;
`;
const TaskButton = styled.div`
  width: ${(p) => p.$w || 80}px;
  margin-left: ${(p) => p.$ml}px;
  height: 80px;
  display: flex;
  align-items: center;
  justify-content: center;
  background: ${(p) => (p.$active ? "#4a4e55" : "transparent")};
  box-shadow: ${(p) => (p.$run ? "inset 0 -4px 0 #76b9ed" : "none")};
`;
const Tray = styled.div`
  margin-left: auto;
  display: flex;
  align-items: center;
`;
const TrayIcon = styled.div`
  width: 49px;
  display: flex;
  justify-content: center;
  &:nth-child(5) { margin-left: -3px; margin-right: 6px; }
`;
const Clock = styled.div`
  width: 140px;
  margin-left: 15px;
  display: flex;
  flex-direction: column;
  align-items: center;
  gap: 11px;
`;
const Notify = styled.div`
  width: 80px;
  height: 80px;
  margin-left: 3px;
  background: #2b3039;
  display: flex;
  align-items: center;
  justify-content: center;
`;
const Peek = styled.div`
  width: 17px;
  height: 80px;
  margin-right: 9px;
  border-right: 1px solid #777;
`;

const WeChat = ({ s, g }) => (
  <svg width={s} height={s} viewBox="0 0 48 48">
    <ellipse cx="18" cy="19" rx="17.500" ry="15" fill={g} />
    <path d="M6 28L5 36L15 32Z" fill={g} />
    <circle cx="12" cy="14.500" r="2.500" fill="#17692a" /><circle cx="24" cy="14.500" r="2.500" fill="#17692a" />
    <ellipse cx="34" cy="29.500" rx="14" ry="12.500" fill="#eef0f1" />
    <path d="M38 40L44 44L43 36Z" fill="#eef0f1" />
    <circle cx="29.500" cy="26.500" r="2" fill="#888" /><circle cx="39" cy="26.500" r="2" fill="#888" />
  </svg>
);

const apps = {
  cortana: <svg width="34" height="34"><circle cx="17" cy="17" r="13.500" fill="none" stroke="#fff" strokeWidth="3" /></svg>,
  taskview: (
    <svg width="34" height="34" fill="none" stroke="#fff" strokeWidth="2">
      <path d="M3 2V7H24V2M3 32V27H24V32M3 11H24V23H3ZM31 2V32" /><rect x="29" y="12" width="4" height="5" fill="#fff" stroke="none" />
    </svg>
  ),
  explorer: (
    <svg width="48" height="40" viewBox="0 0 48 40">
      <path d="M2 2H20L23 6V12H2Z" fill="#e79a12" /><path d="M2 7H46V38H2Z" fill="#fcd462" />
      <path d="M2 12L46 7V38H2Z" fill="#ffcf4b" /><path d="M10 38V25Q10 21 14 21H35Q39 21 39 25V38H32V29H17V38Z" fill="#3a96dd" />
    </svg>
  ),
  vscode: (
    <svg width="50" height="48" viewBox="0 0 50 48">
      <path d="M36 1L7 28L1 31V33L6 37L36 15Z" fill="#0d6cb0" />
      <path d="M6 11L1 15V17L30 43L36 47V33Z" fill="#1b86d0" />
      <path d="M36 1L48 6V42L36 47V33L36 15Z" fill="#2ba2ee" />
    </svg>
  ),
  chrome: (
    <svg width="56" height="56" viewBox="0 0 56 56">
      <circle cx="28" cy="28" r="22" fill="#fcc934" /><path d="M28 28L9 17A22 22 0 0 1 47 17Z" fill="#de4b3f" />
      <path d="M28 6A22 22 0 0 1 49 20H28Z" fill="#de4b3f" />
      <path d="M9 17A22 22 0 0 0 27 50L32 38L20 32Z" fill="#18a15f" />
      <circle cx="28" cy="28" r="10.500" fill="#fff" /><circle cx="28" cy="28" r="8" fill="#4688f1" />
      <circle cx="40" cy="40" r="16" fill="#c3cbe2" /><path d="M27 49A16 16 0 0 0 53 49L46 46H33Z" fill="#45c9b8" />
      <path d="M35 30L38 34L42 29L42 39L47 49H35L38 40Z" fill="#9b8468" /><circle cx="39" cy="35" r="3" fill="#4a3d33" />
    </svg>
  ),
  github: (
    <svg width="48" height="48" viewBox="0 0 48 48">
      <defs><linearGradient id="gh" x1="0" y1="0" x2="0" y2="1"><stop offset="0" stopColor="#9c3fa8" /><stop offset="1" stopColor="#4f2478" /></linearGradient></defs>
      <circle cx="24" cy="24" r="22.500" fill="url(#gh)" stroke="#e8e8e8" strokeWidth="1.500" />
      <path d="M12 11L18 14Q24 12.500 30 14L36 11Q38 15 37 18Q40 22 38 28Q36 33 29 34Q30 36 30 39V46Q24 47 18 46V42Q12 43 10 38Q9 35 7 34Q11 33 13 37Q15 39 18 38Q18 36 19 34Q12 33 10 28Q8 22 11 18Q10 15 12 11Z" fill="#f4f4f4" />
    </svg>
  ),
  typora: (
    <svg width="48" height="48" viewBox="0 0 48 48">
      <path d="M3 3L12 1L20 3L28 3L36 1L45 3L47 12L44 24L47 36L45 45L36 47L24 44L12 47L3 45L1 36L4 24L1 12Z" fill="#f8f8f8" />
      <rect x="6" y="6" width="36" height="36" fill="#ededed" />
      <text x="24" y="34" textAnchor="middle" fontFamily="Liberation Serif, serif" fontSize="29" fill="#222">T</text>
    </svg>
  ),
  wechat: <WeChat s={48} g="#86dc45" />,
  altium: (
    <svg width="32" height="48" viewBox="0 0 32 48">
      <path d="M10 0L31 12V37L10 48L1 43V31L16 20V30L9 34V38L11 39L23 32V17L10 9L9 13L1 19V6Z" fill="#c3a66b" />
      <path d="M1 31L16 20V30L1 40Z" fill="#a88c54" />
    </svg>
  ),
  kicad: (
    <svg width="50" height="50" viewBox="0 0 50 50">
      <path d="M3 1H28L48 21V46Q48 49 45 49H4Q1 49 1 46V3Q1 1 3 1Z" fill="#b98a06" />
      <path d="M5 5H26L44 22V45H5Z" fill="#f1f0ee" /><path d="M34 1H49V18Z" fill="#c89806" />
      <path d="M19 6V12M16 12H22V21H16ZM19 21V25H31M31 22H43V28H31ZM7 31H15M15 25V37M15 29L20 25M15 33L20 38V41H16M25 33H43M25 33V44M30 33V44M34 38H43M34 43H43" fill="none" stroke="#b5460f" strokeWidth="2.400" />
    </svg>
  ),
};

export default function App() {
  return (
    <>
      <Global />
      <Screen>
        <TitleBar>
          <TitleIcon><Ico s={32}>{icons.footprint}</Ico></TitleIcon>
          <T>Footprint Editor — PeltierArray:TB6612FNG</T>
          <Controls $gap={71} $right={39}>
            <svg width="20" height="22"><path d="M0 11H20" stroke="#999" strokeWidth="2" /></svg>
            <svg width="21" height="22"><path d="M1 7H15V21H1ZM6 7V1H20V16H15" fill="none" stroke="#999" strokeWidth="2" /></svg>
            <svg width="20" height="22"><path d="M1 2L19 20M19 2L1 20" stroke="#999" strokeWidth="2" /></svg>
          </Controls>
        </TitleBar>
        <Menu>
          {["File", "Edit", "View", "Place", "Inspect", "Tools", "Preferences", "Help"].map((m) => <T key={m}>{m}</T>)}
        </Menu>
        <Toolbar>
          {mainTools.map((k, i) => k === "|"
            ? <Slot key={i} $w={32} $h={57}><SepV $h={38} /></Slot>
            : <Slot key={i} $w={53.4} $h={57}><Ico>{icons[k]}</Ico></Slot>)}
          <Combo $w={426} $ml={2} $mr={17}><T>Grid: 0.0254 mm (1.00 mils)</T><Chev dir="down" /></Combo>
          <SepV $h={38} />
          <Combo $w={209} $ml={17} $mr={0}><T>Zoom Auto</T><Chev dir="down" /></Combo>
        </Toolbar>
        <Body>
          <Side items={leftTools} w={46} />
          <LibraryPanel />
          <Gutter />
          <CanvasCol>
            <svg width="2612" height="1806" viewBox="815 134 2612 1806">
              <rect x="815" y="134" width="2612" height="1806" fill="#000" />
              <path d="M2157.500 134V1940M815 1081.500H3427" stroke="#000084" />
              {Array.from({ length: 20 }, (_, i) => <rect key={i} x="817" y={Math.round(187.5 + i * 89.35)} width="1" height="1" fill="#999" />)}
              <path d="M815 810.500H838M822.500 772V850" stroke="#777" />
            </svg>
            <Scroll $h={34} $pad="1px 9px 1px 5px">
              <Chev dir="left" /><Track><Thumb $at={1223} $len={110} $t={32} /></Track><Chev dir="right" />
            </Scroll>
          </CanvasCol>
          <Scroll $v $w={35} $pad="8px 1px 40px 1px">
            <Chev dir="up" /><Track $v><Thumb $v $at={854} $len={37} $t={33} /></Track><Chev dir="down" />
          </Scroll>
          <Side items={rightTools} w={53} right />
          <LayersPanel>
            <Caption h={17}>Layers Manager</Caption>
            <Tabs>
              <Tab $on $w={88}><T>Layers</T></Tab>
              <Tab $w={78}><T>Items</T></Tab>
            </Tabs>
            <LayerList>
              {layers.map(([n, c, off]) => (
                <LayerRow key={n} $off={off}>
                  <Marker>{n === "F.SilkS" && <svg width="10" height="19"><path d="M0 0L10 9.500L0 19Z" fill="#4040ff" /></svg>}</Marker>
                  <Swatch $c={c} />
                  <Check>
                    <svg width="20" height="20" viewBox="0 0 20 20"><path d="M2 10L7.500 15.500L18 4" fill="none" stroke="#333" strokeWidth="2" /></svg>
                  </Check>
                  <T>{n}</T>
                </LayerRow>
              ))}
            </LayerList>
          </LayersPanel>
        </Body>
        <InfoBar
          $h={64}
          $pad="1px 0 0 15px"
          $cols="203px 212px 201px 190px 121px 139px 165px 180px 344px 215px 300px"
          items={[["REF**", "TB6612FNG"], ["Last Change", "Oct 09, 2020"], ["Netlist Path"], ["Board Side", "Front"], ["Pads", "1"], ["Status", ".."], ["Rotation", "0.0"], ["Attributes", "Normal"], ["Footprint", "PeltierArray:TB6612FNG"], ["3D-Shape", "No 3D shape"], ["Doc:", "Key Words:"]]}
        />
        <StatusLine
          $h={38}
          $cols="1899px 126px 369px 576px 421px 94px"
          items={["", "Z 9.81", "X -37.973000  Y -7.696200", "dx -37.973000  dy -7.696200  dist 38.745", "grid X 0.025400  Y 0.025400", "mm"]}
        />
        <TaskBar>
          <StartButton>
            <svg width="32" height="32" viewBox="0 0 32 32" fill="#fff"><path d="M0 4.500L13 2.700V15.300H0ZM14.500 2.500L32 0V15.300H14.500ZM0 16.700H13V29.300L0 27.500ZM14.500 16.700H32V32L14.500 29.500Z" /></svg>
          </StartButton>
          <Search>
            <svg width="34" height="34" fill="none" stroke="#ddd" strokeWidth="2.200"><circle cx="21" cy="13" r="11" /><path d="M13 21L1 33" /></svg>
            <span>在这里输入你要搜索的内容</span>
          </Search>
          <TaskButton $ml={8}>{apps.cortana}</TaskButton>
          <TaskButton $ml={16}>{apps.taskview}</TaskButton>
          <TaskButton $ml={22} $run>{apps.explorer}</TaskButton>
          <TaskButton $ml={18}>{apps.vscode}</TaskButton>
          <TaskButton $ml={18} $run>{apps.chrome}</TaskButton>
          <TaskButton $ml={18} $run>{apps.github}</TaskButton>
          <TaskButton $ml={18} $run>{apps.typora}</TaskButton>
          <TaskButton $ml={18} $run>{apps.wechat}</TaskButton>
          <TaskButton $ml={18} $run>{apps.altium}</TaskButton>
          <TaskButton $ml={10} $w={95} $run $active>{apps.kicad}</TaskButton>
          <Tray>
            <TrayIcon><svg width="26" height="16"><path d="M2 14L13 2L24 14" fill="none" stroke="#fff" strokeWidth="2.200" /></svg></TrayIcon>
            <TrayIcon>
              <svg width="34" height="28" fill="none" stroke="#fff" strokeWidth="2.200"><path d="M10 3H32V19H8M18 19V26M10 26H26M2 2H9V9H2ZM5 9V26" /></svg>
            </TrayIcon>
            <TrayIcon><WeChat s={34} g="#2fd36a" /></TrayIcon>
            <TrayIcon>
              <svg width="34" height="30" fill="none" strokeWidth="2"><path d="M2 10H7L13 3V27L7 20H2Z" stroke="#fff" /><path d="M17 10Q20 15 17 20" stroke="#fff" /><path d="M22 6Q27 15 22 24" stroke="#aaa" /><path d="M27 3Q34 15 27 27" stroke="#777" /></svg>
            </TrayIcon>
            <TrayIcon>
              <svg width="30" height="28" fill="none" stroke="#fff" strokeWidth="2.200"><path d="M10 4H28V18H10M19 18V26M12 25H26" /><rect x="2" y="9" width="9" height="9" fill="#fff" /><path d="M4 9V2H9V9" /></svg>
            </TrayIcon>
            <T>ENG</T>
            <Clock><T>15:50</T><T>2020/10/9</T></Clock>
            <Notify>
              <svg width="34" height="36" fill="none" stroke="#fff" strokeWidth="2.500"><path d="M2 3H32V28H22L17 33L12 28H2Z" /></svg>
            </Notify>
            <Peek />
          </Tray>
        </TaskBar>
        <WizardWindow />
      </Screen>
    </>
  );
}
